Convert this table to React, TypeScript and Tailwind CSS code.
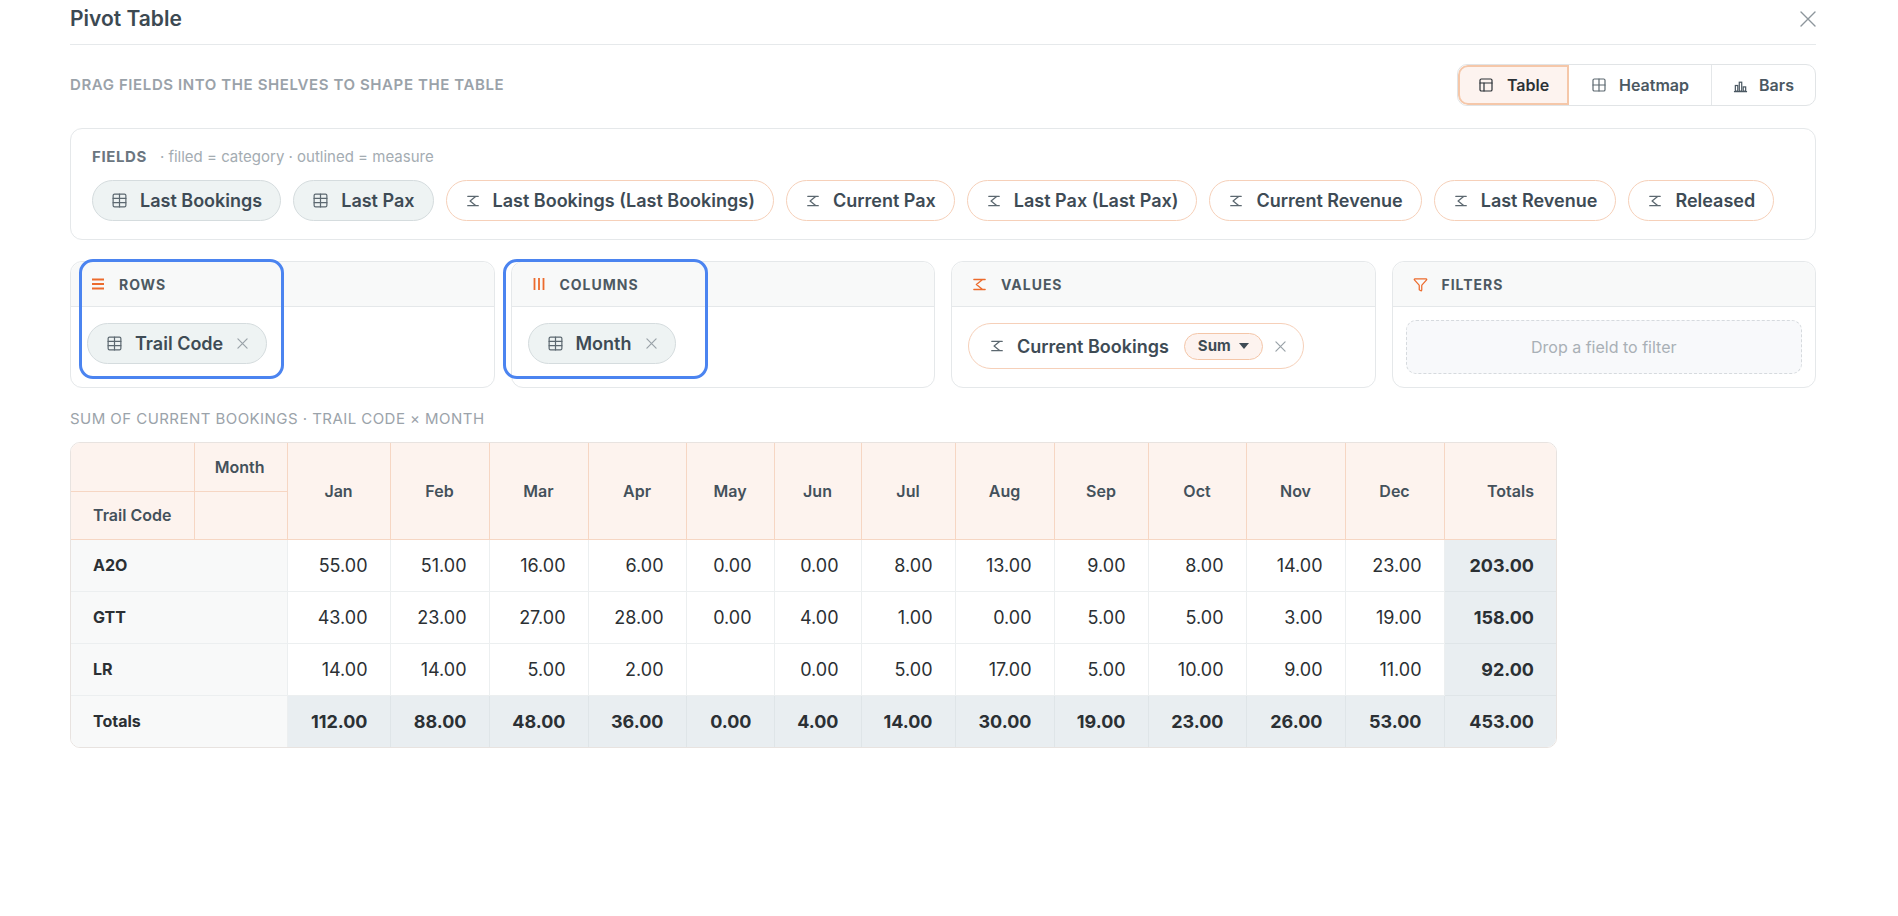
import React from 'react';
import { Table as TableIcon, PanelsTopLeft, Grid2x2, Funnel } from 'lucide-react';

const months = ['Jan', 'Feb', 'Mar', 'Apr', 'May', 'Jun', 'Jul', 'Aug', 'Sep', 'Oct', 'Nov', 'Dec'];
const colWidths = [123, 93, 103, 99, 99, 98, 88, 87, 94, 99, 94, 98, 99, 99, 112];

const rows: { code: string; values: (number | null)[]; total: number }[] = [
  { code: 'A2O', values: [55, 51, 16, 6, 0, 0, 8, 13, 9, 8, 14, 23], total: 203 },
  { code: 'GTT', values: [43, 23, 27, 28, 0, 4, 1, 0, 5, 5, 3, 19], total: 158 },
  { code: 'LR', values: [14, 14, 5, 2, null, 0, 5, 17, 5, 10, 9, 11], total: 92 },
];
const totals = [112, 88, 48, 36, 0, 4, 14, 30, 19, 23, 26, 53];

const Sigma: React.FC<{ className?: string }> = ({ className }) => (
  <svg viewBox="0 0 24 24" fill="none" stroke="currentColor" strokeWidth={2.2} strokeLinecap="round" strokeLinejoin="round" className={className}>
    <path d="M3 4h18M17 4 7 12l10 8M3 20h18" />
  </svg>
);

const SmallX: React.FC<{ className?: string }> = ({ className }) => (
  <svg viewBox="0 0 12 12" fill="none" stroke="currentColor" strokeWidth={1.3} strokeLinecap="round" className={className}>
    <path d="M1 1l10 10M11 1 1 11" />
  </svg>
);

const BarsIcon = () => (
  <svg viewBox="0 0 16 16" fill="none" stroke="currentColor" strokeWidth={1.3} className="h-[15px] w-[15px]">
    <path d="M1 14.5h14" />
    <rect x="2.5" y="8" width="2.6" height="6" />
    <rect x="6.7" y="4.5" width="2.6" height="9.5" />
    <rect x="10.9" y="9.5" width="2.6" height="4.5" />
  </svg>
);

const CategoryChip: React.FC<{ label: string; removable?: boolean }> = ({ label, removable }) => (
  <div className="flex h-[41px] shrink-0 items-center whitespace-nowrap rounded-full border border-[#d5dcde] bg-[#eef3f3] pl-[18px] pr-[18px]">
    <TableIcon size={17} strokeWidth={1.7} className="text-[#5c6870]" />
    <span className="ml-[12px] text-[18px] font-semibold text-[#3e4b55]">{label}</span>
    {removable && <SmallX className="ml-[14px] h-[11px] w-[11px] text-[#99a2a8]" />}
  </div>
);

const MeasureChip: React.FC<{ label: string }> = ({ label }) => (
  <div className="flex h-[41px] shrink-0 items-center whitespace-nowrap rounded-full border border-[#f6d0b9] bg-white pl-[19px] pr-[18px]">
    <Sigma className="h-[14px] w-[14px] text-[#5c6870]" />
    <span className="ml-[13px] text-[18px] font-semibold text-[#3e4b55]">{label}</span>
  </div>
);

const Shelf: React.FC<{ icon: React.ReactNode; label: string; children?: React.ReactNode; body?: string; highlight?: string }> = ({
  icon,
  label,
  children,
  body = 'px-[16px] pt-[16px]',
  highlight,
}) => (
  <div className="relative rounded-[12px] border border-[#e5e8ea] bg-white">
    <div className="flex h-[45px] items-center gap-[14px] rounded-t-[12px] border-b border-[#e5e8ea] bg-[#f8f9f9] px-[20px]">
      {icon}
      <span className="text-[14px] font-bold tracking-[0.07em] text-[#4d5962]">{label}</span>
    </div>
    <div className={`h-[80px] ${body}`}>{children}</div>
    {highlight && <div className={`pointer-events-none absolute top-[-3px] h-[120px] w-[205px] rounded-[14px] border-[3px] border-[#4b84f0] ${highlight}`} />}
  </div>
);

const fmt = (n: number) => n.toFixed(2);

export default function App() {
  const headCell = 'border-b border-r border-[#f6d6c3] bg-[#fdf3ee] text-[16px] font-semibold text-[#44515b]';
  const bodyCell = 'h-[52px] border-b border-r border-[#eceff0] pr-[22px] text-right text-[18px] text-[#2b3034]';
  const totalCell = 'h-[52px] border-r border-[#dfe5e8] bg-[#e9eef1] pr-[22px] text-right text-[18px] font-bold text-[#2b3034]';
  const rowHead = 'h-[52px] border-b border-r border-[#eceff0] bg-[#f8f9f9] pl-[22px] text-left text-[16px] font-bold text-[#2b3034]';

  return (
    <div className="min-h-[916px] w-[1898px] bg-white font-['Inter','Noto_Sans',sans-serif]">
      <div className="ml-[70px] w-[1746px]">
        {/* title */}
        <div className="flex h-[45px] items-start justify-between border-b border-[#e6e9eb] pt-[5px]">
          <h1 className="text-[21px] font-semibold leading-[28px] text-[#3c4952]">Pivot Table</h1>
          <svg viewBox="0 0 16 16" className="mt-[6px] h-[16px] w-[16px]" fill="none" stroke="#8d969c" strokeWidth={1.4} strokeLinecap="round">
            <path d="M1 1l14 14M15 1 1 15" />
          </svg>
        </div>

        {/* hint + view toggle */}
        <div className="mt-[19px] flex h-[42px] items-center justify-between">
          <span className="text-[15px] font-semibold uppercase tracking-[0.04em] text-[#9aa2a9]">Drag fields into the shelves to shape the table</span>
          <div className="flex h-[42px] overflow-hidden rounded-[10px] border border-[#e1e4e6]">
            <button className="flex w-[111px] items-center justify-center gap-[13px] rounded-l-[10px] bg-[#fdf3ef] text-[16px] font-semibold text-[#2b3136] shadow-[inset_0_0_0_2px_#f5c7a9]">
              <PanelsTopLeft size={16} strokeWidth={1.8} />
              Table
            </button>
            <button className="flex w-[142px] items-center justify-center gap-[12px] text-[16px] font-semibold text-[#4b5862]">
              <Grid2x2 size={16} strokeWidth={1.8} className="text-[#5c6870]" />
              Heatmap
            </button>
            <button className="flex w-[104px] items-center justify-center gap-[11px] border-l border-[#e4e7e9] text-[16px] font-semibold text-[#4b5862]">
              <BarsIcon />
              Bars
            </button>
          </div>
        </div>

        {/* fields */}
        <div className="mt-[22px] rounded-[12px] border border-[#e5e8ea] px-[21px] pb-[18px] pt-[17px]">
          <div className="flex h-[22px] items-center gap-[13px]">
            <span className="text-[15px] font-bold tracking-[0.04em] text-[#6b7680]">FIELDS</span>
            <span className="text-[15px] text-[#a4acb2]">· filled = category · outlined = measure</span>
          </div>
          <div className="mt-[12px] flex gap-[12px]">
            <CategoryChip label="Last Bookings" />
            <CategoryChip label="Last Pax" />
            <MeasureChip label="Last Bookings (Last Bookings)" />
            <MeasureChip label="Current Pax" />
            <MeasureChip label="Last Pax (Last Pax)" />
            <MeasureChip label="Current Revenue" />
            <MeasureChip label="Last Revenue" />
            <MeasureChip label="Released" />
          </div>
        </div>

        {/* shelves */}
        <div className="mt-[21px] grid grid-cols-4 gap-[16px]">
          <Shelf
            label="ROWS"
            highlight="left-[8px]"
            icon={
              <svg viewBox="0 0 14 14" className="h-[14px] w-[14px]" stroke="#ec6b2d" strokeWidth={1.8}>
                <path d="M1 2.5h12M1 7h12M1 11.5h12" />
              </svg>
            }
          >
            <div className="flex">
              <CategoryChip label="Trail Code" removable />
            </div>
          </Shelf>
          <Shelf
            label="COLUMNS"
            highlight="left-[-9px]"
            icon={
              <svg viewBox="0 0 14 14" className="h-[14px] w-[14px]" stroke="#ec6b2d" strokeWidth={1.8}>
                <path d="M2.5 1v12M7 1v12M11.5 1v12" />
              </svg>
            }
          >
            <div className="flex">
              <CategoryChip label="Month" removable />
            </div>
          </Shelf>
          <Shelf label="VALUES" icon={<Sigma className="h-[15px] w-[15px] text-[#ec6b2d]" />}>
            <div className="flex">
              <div className="flex h-[46px] items-center whitespace-nowrap rounded-full border border-[#f6d0b9] bg-white pl-[21px] pr-[17px]">
                <Sigma className="h-[14px] w-[14px] text-[#5c6870]" />
                <span className="ml-[13px] text-[18px] font-semibold text-[#3e4b55]">Current Bookings</span>
                <span className="ml-[15px] flex h-[27px] items-center gap-[8px] rounded-full border border-[#f4c6a8] bg-[#fdf3ef] pl-[13px] pr-[13px] text-[15px] font-bold text-[#3e4b55]">
                  Sum
                  <svg viewBox="0 0 10 6" className="h-[6px] w-[10px]" fill="#3e4b55">
                    <path d="M0 0h10L5 6z" />
                  </svg>
                </span>
                <SmallX className="ml-[12px] h-[11px] w-[11px] text-[#99a2a8]" />
              </div>
            </div>
          </Shelf>
          <Shelf label="FILTERS" body="px-[13px] pt-[13px]" icon={<Funnel size={15} strokeWidth={2} className="text-[#ec6b2d]" />}>
            <div className="flex h-[54px] items-center justify-center rounded-[10px] border border-dashed border-[#d6dade] bg-[#f8f9fb] text-[16px] text-[#a9b0b6]">
              Drop a field to filter
            </div>
          </Shelf>
        </div>

        {/* caption */}
        <div className="mt-[21px] text-[15px] uppercase leading-[20px] tracking-[0.03em] text-[#9ba3aa]">Sum of Current Bookings · Trail Code × Month</div>

        {/* pivot table */}
        <div className="mt-[13px] w-[1487px] overflow-hidden rounded-[10px] border border-[#e8e3e0]">
          <table className="w-[1485px] table-fixed border-collapse">
            <colgroup>
              {colWidths.map((w, i) => (
                <col key={i} style={{ width: w }} />
              ))}
            </colgroup>
            <thead>
              <tr>
                <th className={`h-[48px] ${headCell}`} />
                <th className={`h-[48px] pr-[22px] text-right ${headCell}`}>Month</th>
                {months.map((m) => (
                  <th key={m} rowSpan={2} className={`text-center ${headCell}`}>
                    {m}
                  </th>
                ))}
                <th rowSpan={2} className="border-b border-[#f6d6c3] bg-[#fdf3ee] pr-[22px] text-right text-[16px] font-semibold text-[#44515b]">
                  Totals
                </th>
              </tr>
              <tr>
                <th className={`h-[48px] pl-[22px] text-left ${headCell}`}>Trail Code</th>
                <th className={`h-[48px] ${headCell}`} />
              </tr>
            </thead>
            <tbody>
              {rows.map((r) => (
                <tr key={r.code}>
                  <th colSpan={2} className={rowHead}>
                    {r.code}
                  </th>
                  {r.values.map((v, i) => (
                    <td key={i} className={bodyCell}>
                      {v === null ? '' : fmt(v)}
                    </td>
                  ))}
                  <td className="h-[52px] border-b border-[#dfe5e8] bg-[#e9eef1] pr-[22px] text-right text-[18px] font-bold text-[#2b3034]">{fmt(r.total)}</td>
                </tr>
              ))}
              <tr>
                <th colSpan={2} className="h-[52px] border-r border-[#eceff0] bg-[#f8f9f9] pl-[22px] text-left text-[16px] font-bold text-[#2b3034]">
                  Totals
                </th>
                {totals.map((t, i) => (
                  <td key={i} className={totalCell}>
                    {fmt(t)}
                  </td>
                ))}
                <td className="h-[52px] bg-[#e9eef1] pr-[22px] text-right text-[18px] font-bold text-[#2b3034]">{fmt(453)}</td>
              </tr>
            </tbody>
          </table>
        </div>
      </div>
    </div>
  );
}
